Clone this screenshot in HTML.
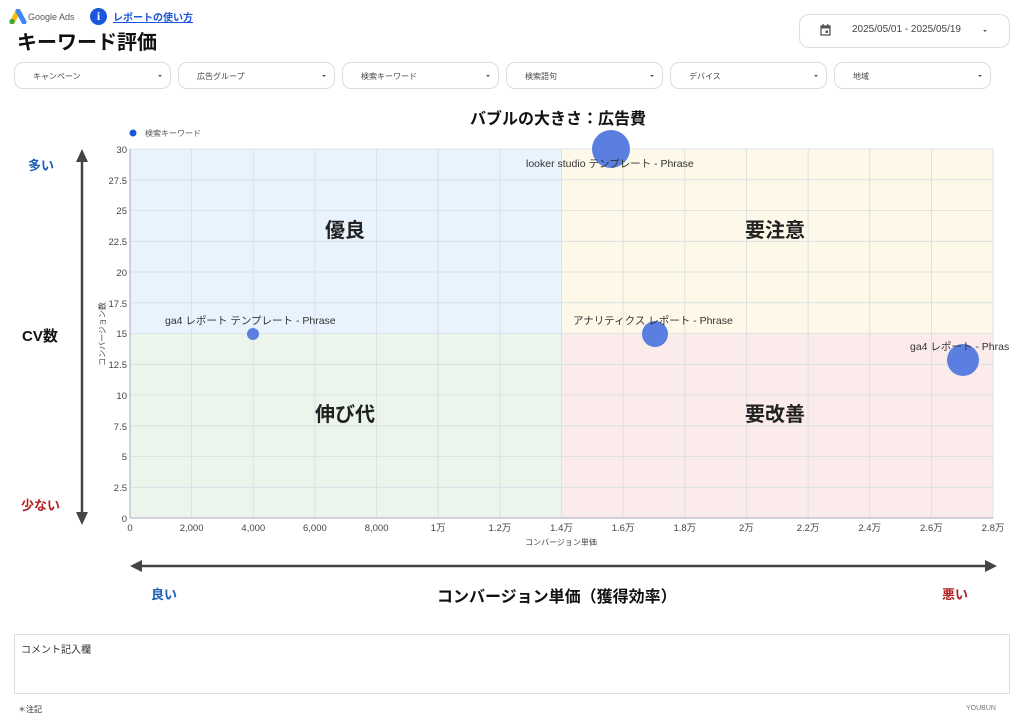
<!DOCTYPE html>
<html><head><meta charset="utf-8"><style>
*{margin:0;padding:0;box-sizing:border-box}
body{width:1024px;height:723px;background:#fff;position:relative;overflow:hidden;font-family:"Liberation Sans","Noto Sans CJK JP",sans-serif;color:#222}
.a{position:absolute;white-space:nowrap}
.f{position:absolute;top:62px;height:27px;width:157px;border:1px solid #ddd;border-radius:9px;font-size:8px;color:#444;padding:8px 0 0 18px}
.f:after{content:"";position:absolute;right:8px;top:12px;border:2px solid transparent;border-top:2px solid #555}
</style></head><body>
<svg class="a" style="left:9px;top:9px" width="18" height="15" viewBox="0 0 18 15"><path d="M3 14 L9 2" stroke="#fbbc04" stroke-width="5" stroke-linecap="round"/><path d="M9 2 L15 13" stroke="#4285f4" stroke-width="5" stroke-linecap="round"/><circle cx="3" cy="12.5" r="2.6" fill="#34a853"/></svg>
<div class="a" style="left:28px;top:12px;font-size:9px;color:#555">Google Ads</div>
<div class="a" style="left:90px;top:8px;width:17px;height:17px;border-radius:50%;background:#1a56db;color:#fff;font-size:12px;font-weight:bold;text-align:center;line-height:17px;font-family:'Liberation Serif',serif">i</div>
<div class="a" style="left:113px;top:9px;font-size:10px;color:#1a56db;font-weight:bold;text-decoration:underline">レポートの使い方</div>
<div class="a" style="left:17px;top:26px;font-size:20px;font-weight:bold;color:#111">キーワード評価</div>
<div class="a" style="left:799px;top:14px;width:211px;height:34px;border:1px solid #ddd;border-radius:10px"></div>
<svg class="a" style="left:820px;top:24px" width="11" height="12" viewBox="0 0 11 12"><rect x="1" y="2" width="9" height="9" fill="none" stroke="#555" stroke-width="1.3"/><rect x="1" y="2" width="9" height="2.5" fill="#555"/><rect x="2.5" y="0" width="1.3" height="3" fill="#555"/><rect x="7.2" y="0" width="1.3" height="3" fill="#555"/><rect x="5.5" y="6.5" width="2.5" height="2.5" fill="#555"/></svg>
<div class="a" style="left:852px;top:24px;font-size:10px;color:#444">2025/05/01 - 2025/05/19</div>
<div class="a" style="left:983px;top:30px;border:2px solid transparent;border-top:2px solid #555"></div>
<div class="f" style="left:14px">キャンペーン</div>
<div class="f" style="left:178px">広告グループ</div>
<div class="f" style="left:342px">検索キーワード</div>
<div class="f" style="left:506px">検索語句</div>
<div class="f" style="left:670px">デバイス</div>
<div class="f" style="left:834px">地域</div>
<div class="a" style="left:470px;top:105px;font-size:16px;font-weight:bold;color:#111">バブルの大きさ：広告費</div>
<svg class="a" style="left:0;top:0" width="1024" height="723">
<circle cx="133" cy="133" r="3.5" fill="#1a56db"/>
<text x="145" y="136" font-size="8" fill="#555">検索キーワード</text>
<rect x="130" y="149" width="431" height="185" fill="#e8f3fd"/>
<rect x="561" y="149" width="432" height="185" fill="#fdf8e7"/>
<rect x="130" y="334" width="431" height="184" fill="#ebf5ec"/>
<rect x="561" y="334" width="432" height="184" fill="#fbeceb"/>
<g stroke="#d6dde3" stroke-width="0.8">
<line x1="191.6" y1="149" x2="191.6" y2="518"/><line x1="253.3" y1="149" x2="253.3" y2="518"/><line x1="314.9" y1="149" x2="314.9" y2="518"/><line x1="376.6" y1="149" x2="376.6" y2="518"/><line x1="438.2" y1="149" x2="438.2" y2="518"/><line x1="499.9" y1="149" x2="499.9" y2="518"/><line x1="561.5" y1="149" x2="561.5" y2="518"/><line x1="623.1" y1="149" x2="623.1" y2="518"/><line x1="684.8" y1="149" x2="684.8" y2="518"/><line x1="746.4" y1="149" x2="746.4" y2="518"/><line x1="808.1" y1="149" x2="808.1" y2="518"/><line x1="869.7" y1="149" x2="869.7" y2="518"/><line x1="931.4" y1="149" x2="931.4" y2="518"/><line x1="993" y1="149" x2="993" y2="518"/>
<line x1="130" y1="149" x2="993" y2="149"/><line x1="130" y1="179.8" x2="993" y2="179.8"/><line x1="130" y1="210.5" x2="993" y2="210.5"/><line x1="130" y1="241.3" x2="993" y2="241.3"/><line x1="130" y1="272" x2="993" y2="272"/><line x1="130" y1="302.8" x2="993" y2="302.8"/><line x1="130" y1="333.5" x2="993" y2="333.5"/><line x1="130" y1="364.3" x2="993" y2="364.3"/><line x1="130" y1="395" x2="993" y2="395"/><line x1="130" y1="425.8" x2="993" y2="425.8"/><line x1="130" y1="456.5" x2="993" y2="456.5"/><line x1="130" y1="487.3" x2="993" y2="487.3"/>
</g>
<line x1="130" y1="149" x2="130" y2="518" stroke="#aab" stroke-width="1"/>
<line x1="130" y1="518" x2="993" y2="518" stroke="#aab" stroke-width="1"/>
<g font-size="9.5" fill="#444" text-anchor="end">
<text x="127" y="153">30</text><text x="127" y="184">27.5</text><text x="127" y="214">25</text><text x="127" y="245">22.5</text><text x="127" y="276">20</text><text x="127" y="307">17.5</text><text x="127" y="337">15</text><text x="127" y="368">12.5</text><text x="127" y="399">10</text><text x="127" y="430">7.5</text><text x="127" y="460">5</text><text x="127" y="491">2.5</text><text x="127" y="522">0</text>
</g>
<g font-size="9.5" fill="#444" text-anchor="middle">
<text x="130" y="531">0</text><text x="191.6" y="531">2,000</text><text x="253.3" y="531">4,000</text><text x="314.9" y="531">6,000</text><text x="376.6" y="531">8,000</text><text x="438.2" y="531">1万</text><text x="499.9" y="531">1.2万</text><text x="561.5" y="531">1.4万</text><text x="623.1" y="531">1.6万</text><text x="684.8" y="531">1.8万</text><text x="746.4" y="531">2万</text><text x="808.1" y="531">2.2万</text><text x="869.7" y="531">2.4万</text><text x="931.4" y="531">2.6万</text><text x="993" y="531">2.8万</text>
</g>
<text x="561" y="545" font-size="8" fill="#444" text-anchor="middle">コンバージョン単価</text>
<text transform="translate(105 334) rotate(-90)" font-size="8" fill="#444" text-anchor="middle">コンバージョン数</text>
<g font-size="20" font-weight="bold" fill="#222" text-anchor="middle">
<text x="345" y="237">優良</text><text x="775" y="237">要注意</text><text x="345" y="421">伸び代</text><text x="775" y="421">要改善</text>
</g>
<g fill="#5a7fe0">
<circle cx="253" cy="334" r="6"/><circle cx="611" cy="149" r="19"/><circle cx="655" cy="334" r="13"/><circle cx="963" cy="360" r="16"/>
</g>
<g font-size="10.5" fill="#333">
<text x="165" y="324">ga4 レポート テンプレート - Phrase</text>
<text x="526" y="167">looker studio テンプレート - Phrase</text>
<text x="573" y="324">アナリティクス レポート - Phrase</text>
<text x="910" y="350">ga4 レポート - Phras</text>
</g>
<line x1="82" y1="158" x2="82" y2="516" stroke="#444" stroke-width="2.5"/>
<path d="M76 162 L82 149 L88 162Z M76 512 L82 525 L88 512Z" fill="#444"/>
<line x1="138" y1="566" x2="988" y2="566" stroke="#444" stroke-width="2.5"/>
<path d="M142 560 L130 566 L142 572Z M985 560 L997 566 L985 572Z" fill="#444"/>
</svg>
<div class="a" style="left:28px;top:155px;font-size:13px;font-weight:bold;color:#1a5fb4">多い</div>
<div class="a" style="left:22px;top:325px;font-size:15px;font-weight:bold;color:#111">CV数</div>
<div class="a" style="left:21px;top:495px;font-size:13px;font-weight:bold;color:#b21f1f">少ない</div>
<div class="a" style="left:151px;top:584px;font-size:13px;font-weight:bold;color:#1a5fb4">良い</div>
<div class="a" style="left:437px;top:583px;font-size:16px;font-weight:bold;color:#111">コンバージョン単価（獲得効率）</div>
<div class="a" style="left:942px;top:584px;font-size:13px;font-weight:bold;color:#b21f1f">悪い</div>
<div class="a" style="left:14px;top:634px;width:996px;height:60px;border:1px solid #ddd"></div>
<div class="a" style="left:21px;top:641px;font-size:10px;color:#333">コメント記入欄</div>
<div class="a" style="left:18px;top:704px;font-size:8px;color:#333">＊注記</div>
<div class="a" style="left:966px;top:705px;font-size:7px;color:#777">YOUBUN</div>
</body></html>
